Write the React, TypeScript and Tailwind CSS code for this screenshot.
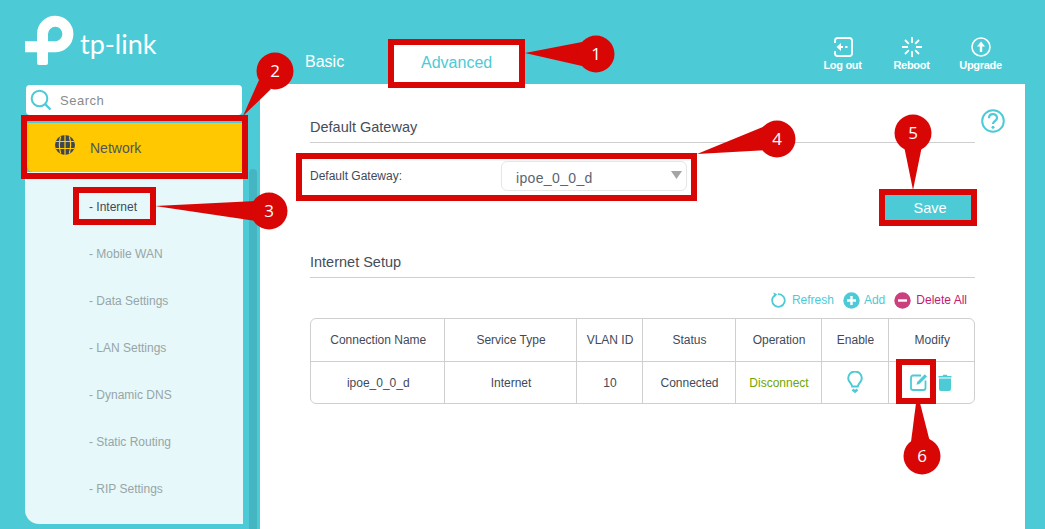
const sans = "font-['Liberation_Sans',Arial,sans-serif]";
const subItems = ["- Internet", "- Mobile WAN", "- Data Settings", "- LAN Settings", "- Dynamic DNS", "- Static Routing", "- RIP Settings"];
const columns = [
  { name: "Connection Name", width: "w-[133px]", value: "ipoe_0_0_d" },
  { name: "Service Type", width: "w-[132px]", value: "Internet" },
  { name: "VLAN ID", width: "w-[66px]", value: "10" },
  { name: "Status", width: "w-[93px]", value: "Connected" },
];

function Logo() {
  return (
    <div className="flex items-start h-[85px] pl-[25px]">
      <svg width="50" height="52" viewBox="25 15 50 52" className="mt-[15px] shrink-0">
        <path d="M25 46.7 H54.5 A12.7 12.7 0 1 0 42.5 34 V63" fill="none" stroke="#fff" strokeWidth="11" strokeLinejoin="round" />
        <rect x="37" y="55" width="11" height="10" rx="2" fill="#fff" />
      </svg>
      <span className="ml-[5px] mt-[27px] text-[27px] leading-[34px] text-white font-normal font-['Lato',sans-serif]">tp-link</span>
    </div>
  );
}

function Sidebar() {
  return (
    <div className="w-[260px] shrink-0">
      <Logo />
      <div className="ml-[26px] w-[216px] h-[30px] bg-white rounded-[4px] flex items-center">
        <svg width="22" height="22" viewBox="0 0 22 22" className="ml-[4px]" fill="none" stroke="#4ccbd6">
          <circle cx="9.5" cy="9.5" r="7.8" strokeWidth="2" />
          <path d="M15 15 L20.5 20.5" strokeWidth="2.4" />
        </svg>
        <span className="ml-[8px] mt-[1px] text-[13px] tracking-[0.5px] text-[#8a8a8a]">Search</span>
      </div>
      <div className="ml-[27px] mt-[8px] w-[215px] h-[49px] bg-[#ffc800] rounded-bl-[6px] flex items-center">
        <svg width="22" height="22" viewBox="0 0 22 22" className="ml-[27px] -mt-[5px]" fill="none">
          <circle cx="11" cy="11" r="10" fill="#3d4653" />
          <path d="M1.5 7.5H20.5M1.5 14.5H20.5M11 1V21M6.7 2.5C5 8 5 14 6.7 19.5M15.3 2.5C17 8 17 14 15.3 19.5" stroke="#ffc800" strokeWidth="1.2" />
        </svg>
        <span className="ml-[14px] mt-[2px] text-[14px] text-[#50555c]">Network</span>
      </div>
      <div className="flex items-start">
        <div className="ml-[25px] w-[218px] h-[352px] bg-[#e6f8f9] rounded-bl-[14px] pt-[12px]">
          {subItems.map((item, i) => (
            <div key={item} className={`h-[47px] pl-[64px] text-[12px] leading-[47px] ${i === 0 ? "text-[#3f4a58]" : "text-[#98a5a8]"}`}>{item}</div>
          ))}
        </div>
        <div className="ml-[6px] -mt-[3px] w-[8px] h-[360px] rounded-t-[4px] bg-[#45b6c1]" />
      </div>
    </div>
  );
}

function HeaderAction({ label, children }: { label: string; children: React.ReactNode }) {
  return (
    <div className="w-[69px] flex flex-col items-center">
      {children}
      <span className="mt-[2px] text-[11px] leading-[13px] font-bold tracking-[-0.3px] text-white">{label}</span>
    </div>
  );
}

function Header() {
  return (
    <div className="h-[84px] flex items-start">
      <div className="ml-[45px] mt-[53px] text-[16px] leading-[18px] text-white">Basic</div>
      <div className="ml-[49px] mt-[45px] w-[127px] h-[37px] bg-white flex items-center justify-center pb-[2px] text-[16px] text-[#4ccbd6]">Advanced</div>
      <div className="ml-auto mr-[30px] mt-[37px] flex">
        <HeaderAction label="Log out">
          <svg width="20" height="20" viewBox="0 0 20 20" fill="none" stroke="#fff" strokeWidth="1.8">
            <path d="M2 6V3.5A2.5 2.5 0 0 1 4.5 1H16.5A2.5 2.5 0 0 1 19 3.5V16.5A2.5 2.5 0 0 1 16.5 19H4.5A2.5 2.5 0 0 1 2 16.5V14" />
            <path d="M7 10H10M12 10H14.5" strokeWidth="1.8" />
            <path d="M8 6L3.5 10L8 14Z" fill="#fff" stroke="none" />
          </svg>
        </HeaderAction>
        <HeaderAction label="Reboot">
          <svg width="20" height="20" viewBox="0 0 20 20" fill="none" stroke="#fff" strokeWidth="1.8">
            <path d="M10 0V6M10 14V20M0 10H6M14 10H20M3 3L6.8 6.8M17 3L13.2 6.8M3 17L6.8 13.2M17 17L13.2 13.2" />
          </svg>
        </HeaderAction>
        <HeaderAction label="Upgrade">
          <svg width="20" height="20" viewBox="0 0 20 20" fill="none" stroke="#fff">
            <circle cx="10" cy="10" r="9" strokeWidth="1.6" />
            <path d="M10 4.5L14 9.5H11.2V15H8.8V9.5H6Z" fill="#fff" stroke="none" />
          </svg>
        </HeaderAction>
      </div>
    </div>
  );
}

function Toolbar() {
  return (
    <div className="mt-[13px] w-[665px] h-[18px] flex items-center justify-end pr-[8px] text-[12px]">
      <svg width="16" height="16" viewBox="0 0 16 16" fill="none" stroke="#4ccbd6" strokeWidth="1.8">
        <path d="M5 3.2A6.3 6.3 0 1 0 8 2.2" />
        <path d="M3.5 0.5L7.2 2.3L4.4 5.5Z" fill="#4ccbd6" stroke="none" />
      </svg>
      <span className="ml-[6px] text-[#4ccbd6]">Refresh</span>
      <svg width="17" height="17" viewBox="0 0 17 17" className="ml-[9px]">
        <circle cx="8.5" cy="8.5" r="8.2" fill="#4ccbd6" />
        <path d="M8.5 4V13M4 8.5H13" stroke="#fff" strokeWidth="2.4" />
      </svg>
      <span className="ml-[4px] text-[#4ccbd6]">Add</span>
      <svg width="17" height="17" viewBox="0 0 17 17" className="ml-[9px]">
        <circle cx="8.5" cy="8.5" r="8.2" fill="#cc3f7e" />
        <path d="M4 8.5H13" stroke="#fff" strokeWidth="2.4" />
      </svg>
      <span className="ml-[5px] text-[#c2206f]">Delete All</span>
    </div>
  );
}

function ConnectionTable() {
  return (
    <div className="mt-[9px] w-[665px] border border-[#cfcfcf] rounded-[6px] overflow-hidden">
      <table className="w-full table-fixed border-collapse text-[12px] text-[#3f4a58] text-center">
        <thead>
          <tr className="h-[42px] border-b border-[#cfcfcf]">
            {columns.map((c) => (
              <th key={c.name} className={`${c.width} pl-[2px] font-normal border-r border-[#cfcfcf]`}>{c.name}</th>
            ))}
            <th className="w-[86px] pl-[2px] font-normal border-r border-[#cfcfcf]">Operation</th>
            <th className="w-[67px] pl-[2px] font-normal border-r border-[#cfcfcf]">Enable</th>
            <th className="pl-[2px] font-normal">Modify</th>
          </tr>
        </thead>
        <tbody>
          <tr className="h-[42px]">
            {columns.map((c) => (
              <td key={c.name} className="pl-[2px] pt-[2px] border-r border-[#cfcfcf]">{c.value}</td>
            ))}
            <td className="pl-[2px] pt-[2px] border-r border-[#cfcfcf] text-[#6fa500]">Disconnect</td>
            <td className="border-r border-[#cfcfcf]">
              <svg width="16" height="22" viewBox="0 0 16 22" fill="none" stroke="#4ccbd6" strokeWidth="2" className="mx-auto">
                <path d="M5.2 15.5C5 12.5 1.2 11 1.2 7.2A6.8 6.8 0 0 1 14.8 7.2C14.8 11 11 12.5 10.8 15.5Z" />
                <path d="M5.5 18.5L8 20.5L10.5 18.5" strokeWidth="2.6" />
              </svg>
            </td>
            <td>
              <div className="flex items-center pl-[21px]">
                <svg width="18" height="18" viewBox="0 0 18 18" fill="none" stroke="#4ccbd6" strokeWidth="1.8">
                  <path d="M11 2.5H3A2 2 0 0 0 1 4.5V15A2 2 0 0 0 3 17H13.5A2 2 0 0 0 15.5 15V7.5" />
                  <path d="M6.5 11.8L7.2 9L14.8 1.2L17 3.4L9.3 11.1Z" fill="#4ccbd6" stroke="none" />
                </svg>
                <svg width="14" height="17" viewBox="0 0 14 17" className="ml-[10px]">
                  <path d="M1 4.5H13V15A2 2 0 0 1 11 17H3A2 2 0 0 1 1 15Z" fill="#4ccbd6" />
                  <path d="M0.5 2H4.5L5.3 0.7H8.7L9.5 2H13.5V3.5H0.5Z" fill="#4ccbd6" />
                </svg>
              </div>
            </td>
          </tr>
        </tbody>
      </table>
    </div>
  );
}

function SectionTitle({ children }: { children: React.ReactNode }) {
  return <div className="h-[25px] w-[665px] border-b border-[#cfcfcf] text-[14.5px] leading-[18px] text-[#454d5a]">{children}</div>;
}

function Panel() {
  return (
    <div className="relative mr-[20px] h-[445px] bg-white pl-[50px] pt-[34px]">
      <svg width="24" height="24" viewBox="0 0 24 24" fill="none" stroke="#4ccbd6" className="absolute right-[20px] top-[25px]">
        <circle cx="12" cy="12" r="10.8" strokeWidth="2" />
        <path d="M8 9.3C8 3.9 16 3.9 16 9C16 11.8 12 12 12 15" strokeWidth="2.2" />
        <circle cx="12" cy="18.2" r="1.5" fill="#4ccbd6" stroke="none" />
      </svg>
      <SectionTitle>Default Gateway</SectionTitle>
      <div className="mt-[18px] h-[30px] flex items-center w-[377px]">
        <span className="text-[12px] text-[#3f4a58] w-[191px] -mt-[1px]">Default Gateway:</span>
        <div className="w-[186px] h-[30px] border border-[#e6e6e6] rounded-[6px] flex items-center pl-[14px] pr-[4px] text-[14px] tracking-[0.35px] text-[#5b6472]">
          <span className="mt-[4px]">ipoe_0_0_d</span>
          <svg width="11" height="8" viewBox="0 0 11 8" className="ml-auto -mt-[2px]"><path d="M0 0H11L5.5 8Z" fill="#a5a5a5" /></svg>
        </div>
      </div>
      <div className="mt-[3px] ml-[574px] w-[87px] h-[26px] bg-[#4ccbd6] text-white text-[14.5px] leading-[28px] pl-[5px] text-center">Save</div>
      <div className="mt-[33px]"><SectionTitle>Internet Setup</SectionTitle></div>
      <Toolbar />
      <ConnectionTable />
    </div>
  );
}

function Frame({ className }: { className: string }) {
  return <div className={`absolute border-[6px] border-[#d90606] ${className}`} />;
}

function Callouts() {
  const pins = [
    { n: "1", cx: 596, cy: 54, tail: "525,53 582,42 582,66" },
    { n: "2", cx: 275, cy: 71, tail: "243,116 259,80 271,89" },
    { n: "3", cx: 269, cy: 211, tail: "155,206 256,201 256,221" },
    { n: "4", cx: 777, cy: 139, tail: "697,154 765,126 770,150" },
    { n: "5", cx: 913, cy: 133, tail: "913,190 904,146 922,146" },
    { n: "6", cx: 922, cy: 456, tail: "916,403 920,403 930,442 911,442" },
  ];
  return (
    <svg width="1045" height="529" className="absolute left-0 top-0 pointer-events-none">
      {pins.map((p) => (
        <g key={p.n}>
          <polygon points={p.tail} fill="#d90606" />
          <circle cx={p.cx} cy={p.cy} r="18.5" fill="#d90606" />
          <text x={p.cx} y={p.cy + 6} textAnchor="middle" fill="#fff" fontSize="17" fontFamily="'Open Sans', sans-serif">{p.n}</text>
        </g>
      ))}
    </svg>
  );
}

export default function App() {
  return (
    <div className={`relative w-[1045px] h-[529px] overflow-hidden bg-[#4ccbd6] flex ${sans}`}>
      <Sidebar />
      <div className="flex-1">
        <Header />
        <Panel />
      </div>
      <Callouts />
      <Frame className="left-[388px] top-[39px] w-[137px] h-[49px]" />
      <Frame className="left-[21px] top-[115px] w-[227px] h-[64px]" />
      <Frame className="left-[73px] top-[187px] w-[83px] h-[38px]" />
      <Frame className="left-[296px] top-[153px] w-[401px] h-[48px]" />
      <Frame className="left-[879px] top-[189px] w-[98px] h-[37px]" />
      <Frame className="left-[896px] top-[359px] w-[40px] h-[45px]" />
    </div>
  );
}
